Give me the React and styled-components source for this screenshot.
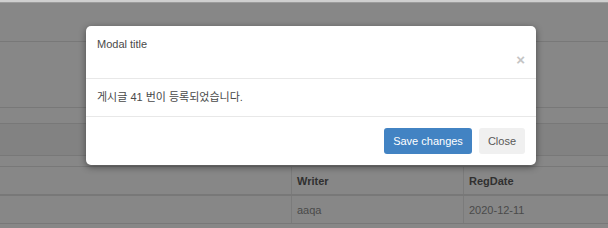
import React from "react";
import styled, { createGlobalStyle } from "styled-components";

const Global = createGlobalStyle`
  html, body { margin: 0; padding: 0; }
  body { font-family: "Liberation Sans", Arial, "Noto Sans CJK KR", sans-serif; background: #878787; }
`;

const Page = styled.div`
  position: relative;
  width: 608px;
  height: 228px;
  overflow: hidden;
  background: #878787;
`;

const TopStrip = styled.div`
  height: 2px;
  background: #cfcfcf;
  border-bottom: 1px solid #9c9c9c;
`;

const Band = styled.div`
  height: ${(p) => p.$h}px;
  background: ${(p) => (p.$dark ? "#828282" : "#878787")};
  border-bottom: ${(p) => p.$bw || 1}px solid #787878;
`;

const TableRow = styled.div`
  display: grid;
  grid-template-columns: 291px 172px 1fr;
  height: ${(p) => p.$h}px;
  border-bottom: ${(p) => p.$bw || 1}px solid #787878;
`;

const Cell = styled.div`
  display: flex;
  align-items: center;
  padding-left: ${(p) => (p.$first ? 0 : 5)}px;
  border-left: ${(p) => (p.$first ? "none" : "1px solid #7b7b7b")};
  font-size: 11px;
  font-weight: ${(p) => (p.$head ? 700 : 400)};
  color: ${(p) => (p.$head ? "#303030" : "#4a4a4a")};
`;

const Modal = styled.div`
  position: absolute;
  left: 86px;
  top: 26px;
  width: 450px;
  background: #fff;
  border-radius: 5px;
  box-shadow: 0 2px 7px rgba(0, 0, 0, 0.45);
  display: flex;
  flex-direction: column;
`;

const Header = styled.div`
  display: flex;
  justify-content: space-between;
  height: 30px;
  padding: 11px;
  border-bottom: 1px solid #e8e8e8;
`;

const Title = styled.div`
  font-size: 11px;
  line-height: 15px;
  color: #4a4a4a;
  align-self: flex-start;
`;

const CloseX = styled.span`
  align-self: flex-end;
  font-size: 15px;
  line-height: 14px;
  font-weight: 700;
  color: #c4c4c4;
  margin-right: 0;
`;

const Body = styled.div`
  padding: 11px;
  font-size: 11px;
  line-height: 15px;
  color: #4a4a4a;
  border-bottom: 1px solid #e8e8e8;
`;

const Footer = styled.div`
  display: flex;
  justify-content: flex-end;
  gap: 7px;
  padding: 11px;
`;

const Button = styled.button`
  height: 26px;
  padding: 0 9px;
  border: none;
  border-radius: 3px;
  font-family: inherit;
  font-size: 11px;
  background: ${(p) => (p.$primary ? "#4283c3" : "#f0f0f0")};
  color: ${(p) => (p.$primary ? "#fff" : "#585858")};
`;

export default function App() {
  return (
    <>
      <Global />
      <Page>
        <TopStrip />
        <Band $h={38} />
        <Band $h={65} />
        <Band $h={15} />
        <Band $h={31} $dark />
        <Band $h={10} />
        <TableRow $h={27} $bw={2}>
          <Cell $first />
          <Cell $head>Writer</Cell>
          <Cell $head>RegDate</Cell>
        </TableRow>
        <TableRow $h={27}>
          <Cell $first />
          <Cell>aaqa</Cell>
          <Cell>2020-12-11</Cell>
        </TableRow>
        <Modal>
          <Header>
            <Title>Modal title</Title>
            <CloseX>×</CloseX>
          </Header>
          <Body>게시글 41 번이 등록되었습니다.</Body>
          <Footer>
            <Button $primary>Save changes</Button>
            <Button>Close</Button>
          </Footer>
        </Modal>
      </Page>
    </>
  );
}
